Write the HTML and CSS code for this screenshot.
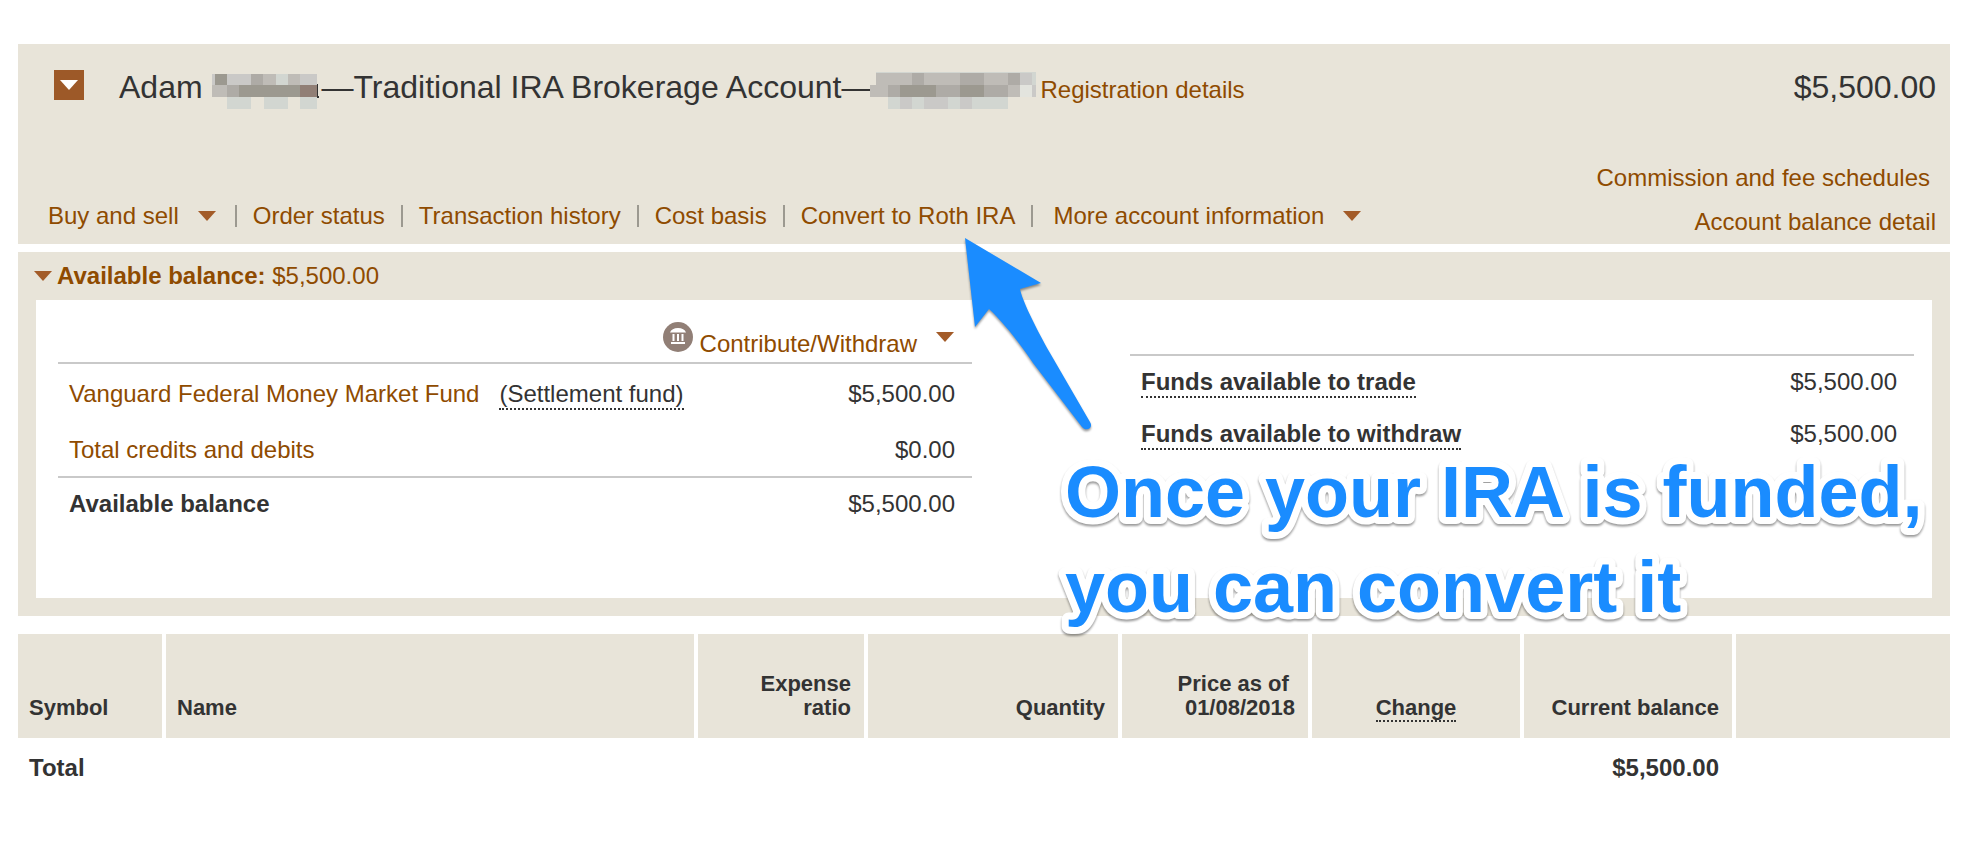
FILE: index.html
```html
<!DOCTYPE html>
<html lang="en">
<head>
<meta charset="utf-8">
<title>Traditional IRA Brokerage Account</title>
<link rel="stylesheet" href="styles.css">
</head>
<body>
<main class="page">
  <section class="account">
    <div class="account-title">
      <button class="toggle" type="button" aria-label="Collapse account">
        <svg class="caret" viewBox="0 0 18 10" aria-hidden="true"><path d="M0 0h18L9 10z"/></svg>
      </button>
      <h1 class="title">Adam <svg class="mask mask-name" viewBox="212 72 110 38" shape-rendering="crispEdges" aria-hidden="true">
          <path fill="#cac9c7" d="M213 74h105v11H213z"/>
          <path fill="#9c9990" d="M216 74h12v11h-12zM240 85h61v12h-61z"/>
          <path fill="#aeaba6" d="M252 74h12v11h-12zM228 85h12v12h-12z"/>
          <path fill="#bfbcb7" d="M264 74h13v11h-13zM289 74h12v11h-12zM213 85h15v12h-15z"/>
          <path fill="#d2d6d1" d="M277 74h12v11h-12zM228 97h24v12h-24zM265 97h24v12h-24zM301 97h17v12h-17z"/>
          <path fill="#917f76" d="M301 85h17v12h-17z"/>
          <path fill="#333" d="M318 84h1v14h-1zM319 96h1v2h-1z"/>
        </svg>—Traditional IRA Brokerage Account—<svg class="mask mask-number" viewBox="870 72 168 38" shape-rendering="crispEdges" aria-hidden="true">
          <path fill="#bfbcb7" d="M877 73h144v12H877zM871 85h18v12h-18zM1009 85h12v12h-12z"/>
          <path fill="#aeaba6" d="M913 73h12v12h-12zM961 73h24v12h-24zM1009 73h12v12h-12zM889 85h120v12H889z"/>
          <path fill="#9c9990" d="M901 85h36v12h-36zM961 85h24v12h-24z"/>
          <path fill="#cac9c7" d="M1021 73h12v12h-12zM1033 85h4v12h-4zM901 97h12v12h-12zM925 97h24v12h-24zM961 97h12v12h-12z"/>
          <path fill="#d2d6d1" d="M877 72h160v1H877zM1033 73h4v12h-4zM889 97h12v12h-12zM913 97h12v12h-12zM949 97h12v12h-12zM973 97h36v12h-36z"/>
          <path fill="#e3e4de" d="M1021 85h12v12h-12z"/>
        </svg><a class="registration" href="#registration">Registration details</a></h1>
    </div>
    <p class="total">$5,500.00</p>
    <nav class="actions" aria-label="Account actions">
      <button class="menu" type="button">Buy and sell <svg class="caret" viewBox="0 0 18 10" aria-hidden="true"><path d="M0 0h18L9 10z"/></svg></button>
      <a href="#orders">Order status</a>
      <a href="#history">Transaction history</a>
      <a href="#cost">Cost basis</a>
      <a href="#convert">Convert to Roth IRA</a>
      <button class="menu menu-more" type="button">More account information <svg class="caret" viewBox="0 0 18 10" aria-hidden="true"><path d="M0 0h18L9 10z"/></svg></button>
    </nav>
    <div class="side-links">
      <a class="fees" href="#fees">Commission and fee schedules</a>
      <a href="#balance">Account balance detail</a>
    </div>
  </section>

  <section class="balance">
    <button class="balance-head" type="button">
      <svg class="caret" viewBox="0 0 18 10" aria-hidden="true"><path d="M0 0h18L9 10z"/></svg>
      <span><strong>Available balance:</strong> $5,500.00</span>
    </button>
    <div class="balance-body">
      <div class="funds">
        <div class="funds-head">
          <svg class="bank" viewBox="0 0 30 30" aria-hidden="true">
            <circle cx="15" cy="15" r="15" fill="#917f76"/>
            <path fill="#fff" d="M7 10.500C8 7.500 11 6 15 6s7 1.500 8 4.500zM9.500 12h2v7h-2zM14 12h2v7h-2zM18.500 12h2v7h-2zM8 20h14v2H8z"/>
          </svg>
          <button class="menu contribute" type="button">Contribute/Withdraw <svg class="caret" viewBox="0 0 18 10" aria-hidden="true"><path d="M0 0h18L9 10z"/></svg></button>
        </div>
        <table class="ledger ledger-left">
          <tbody>
            <tr><th scope="row"><a href="#fund">Vanguard Federal Money Market Fund</a><span class="hint settlement">(Settlement fund)</span></th><td>$5,500.00</td></tr>
            <tr><th scope="row"><a href="#credits">Total credits and debits</a></th><td>$0.00</td></tr>
          </tbody>
          <tfoot>
            <tr><th class="strong" scope="row">Available balance</th><td>$5,500.00</td></tr>
          </tfoot>
        </table>
      </div>
      <table class="ledger ledger-right">
        <tbody>
          <tr><th class="strong" scope="row"><span class="hint">Funds available to trade</span></th><td>$5,500.00</td></tr>
          <tr><th class="strong" scope="row"><span class="hint">Funds available to withdraw</span></th><td>$5,500.00</td></tr>
        </tbody>
      </table>
    </div>
  </section>

  <table class="holdings">
    <colgroup>
      <col class="c-symbol"><col><col class="c-ratio"><col class="c-quantity"><col class="c-price"><col class="c-change"><col class="c-balance"><col class="c-actions">
    </colgroup>
    <thead>
      <tr>
        <th class="left" scope="col">Symbol</th>
        <th class="left" scope="col">Name</th>
        <th scope="col">Expense<br>ratio</th>
        <th scope="col">Quantity</th>
        <th scope="col">Price as of&nbsp;<br>01/08/2018</th>
        <th class="center" scope="col"><span class="hint-tight">Change</span></th>
        <th scope="col">Current balance</th>
        <td></td>
      </tr>
    </thead>
    <tbody>
      <tr><th class="left" scope="row">Total</th><td></td><td></td><td></td><td></td><td></td><td>$5,500.00</td><td></td></tr>
    </tbody>
  </table>

  <svg class="callout" viewBox="950 230 1000 420" role="img" aria-label="Once your IRA is funded, you can convert it">
    <path class="arrow" d="M965 238L1041 283L1020 289C1022 300 1035 326 1050 353L1090 422C1094 428 1086 432 1082 427L1033 363C1018 341 1003 322 989 309L975 327Z"/>
    <text class="note" x="1065" y="517">Once your IRA is funded,</text>
    <text class="note" x="1065" y="612">you can convert it</text>
  </svg>
</main>
</body>
</html>
```

FILE: styles.css
```css
* {
  box-sizing: border-box;
}

body {
  margin: 0;
  background: #fff;
  color: #333;
  font: 24px/30px "Liberation Sans", Arial, Helvetica, sans-serif;
}

a {
  color: #8f4b00;
  text-decoration: none;
}

a:hover {
  text-decoration: underline;
}

button {
  padding: 0;
  border: 0;
  background: none;
  color: #8f4b00;
  font: inherit;
  cursor: pointer;
}

.page {
  position: relative;
  padding: 44px 20px 40px 18px;
}

.caret {
  flex: none;
  width: 18px;
  height: 10px;
  fill: #a35b28;
}

/* Account header */

.account {
  display: grid;
  grid-template-columns: 1fr auto;
  padding: 23px 14px 0 30px;
  background: #e8e4d9;
}

.account-title {
  display: flex;
  align-items: flex-start;
  gap: 35px;
  padding-left: 6px;
}

.toggle {
  display: flex;
  align-items: center;
  justify-content: center;
  width: 30px;
  height: 30px;
  margin-top: 3px;
  background: #9d5928;
}

.toggle .caret {
  fill: #fff;
}

.title,
.total {
  margin: 0;
  font-size: 32px;
  font-weight: 400;
  line-height: 40px;
}

.title {
  white-space: nowrap;
}

.total {
  text-align: right;
}

.mask {
  height: 38px;
  margin: -10px 0;
  vertical-align: -2px;
}

.mask-name {
  width: 110px;
}

.mask-number {
  width: 168px;
  margin-left: -4px;
}

.registration {
  margin-left: 3px;
  font-size: 24px;
  line-height: 30px;
}

.actions {
  display: flex;
  align-self: end;
  margin-bottom: 6px;
  line-height: 44px;
  white-space: nowrap;
}

.actions > * {
  display: flex;
  align-items: center;
}

.actions > * + *::before {
  content: "";
  width: 2px;
  height: 22px;
  margin: 0 16px;
  background: #9c9990;
}

.actions .menu + a::before {
  margin-left: 19px;
}

.actions .menu-more::before {
  margin-right: 20px;
}

.menu {
  display: flex;
  align-items: center;
}

.menu .caret {
  margin-left: 19px;
}

.side-links {
  display: flex;
  flex-direction: column;
  align-items: flex-end;
  margin-top: 49px;
  line-height: 44px;
}

.fees {
  margin-right: 6px;
}

/* Available balance */

.balance {
  margin-top: 8px;
  padding: 0 18px 18px;
  background: #e8e4d9;
}

.balance-head {
  display: flex;
  align-items: center;
  gap: 5px;
  margin-left: -2px;
  line-height: 48px;
}

.balance-body {
  display: grid;
  grid-template-columns: 914fr 784fr;
  align-items: start;
  gap: 158px;
  min-height: 298px;
  padding: 0 18px 60px 22px;
  background: #fff;
}

.funds-head {
  display: flex;
  align-items: flex-start;
  justify-content: flex-end;
  gap: 7px;
  padding: 22px 18px 3px 0;
}

.bank {
  width: 30px;
  height: 30px;
}

.contribute {
  margin-top: 7px;
}

.contribute .caret {
  align-self: flex-start;
  margin-top: 3px;
}

.ledger {
  width: 100%;
  border-collapse: collapse;
}

.ledger th {
  padding: 11px;
  font-weight: 400;
  text-align: left;
}

.ledger th.strong {
  font-weight: 700;
}

.ledger td {
  padding: 11px 17px 11px 0;
  text-align: right;
}

.ledger-left tbody,
.ledger-left tfoot,
.ledger-right tbody {
  border-top: 2px solid #c9c9c9;
}

.ledger-left tbody th,
.ledger-left tbody td {
  padding-top: 15px;
}

.ledger-right {
  margin-top: 54px;
}

.hint,
.hint-tight {
  border-bottom: 2px dotted #333;
}

.hint {
  padding-bottom: 1px;
}

.settlement {
  margin-left: 20px;
}

/* Holdings */

.holdings {
  width: 100%;
  margin-top: 18px;
  border-collapse: separate;
  border-spacing: 0;
  table-layout: fixed;
  font-weight: 700;
  text-align: right;
}

.c-symbol { width: 144px; }
.c-ratio { width: 170px; }
.c-quantity { width: 254px; }
.c-price { width: 190px; }
.c-change,
.c-balance { width: 212px; }
.c-actions { width: 218px; }

.holdings th,
.holdings td {
  padding: 15px 13px 15px 11px;
}

.holdings thead th,
.holdings thead td {
  height: 104px;
  padding-bottom: 18px;
  background-color: #e8e4d9;
  font-size: 22px;
  line-height: 24px;
  vertical-align: bottom;
}

.holdings tr > * + * {
  border-left: 4px solid #fff;
}

.holdings .left {
  text-align: left;
}

.holdings .center {
  padding-right: 11px;
  text-align: center;
}

/* Callout drawn over the panels */

.callout {
  position: absolute;
  top: 230px;
  left: 950px;
  width: 1000px;
  height: 420px;
  pointer-events: none;
}

.arrow {
  fill: #1a8cff;
  filter: drop-shadow(0 2px 1px rgba(0, 0, 0, 0.4));
}

.note {
  fill: #1a8cff;
  stroke: #fff;
  stroke-width: 14px;
  stroke-linejoin: round;
  paint-order: stroke;
  font-size: 72px;
  font-weight: 700;
  filter: drop-shadow(0 2px 1px rgba(0, 0, 0, 0.4));
}
```
